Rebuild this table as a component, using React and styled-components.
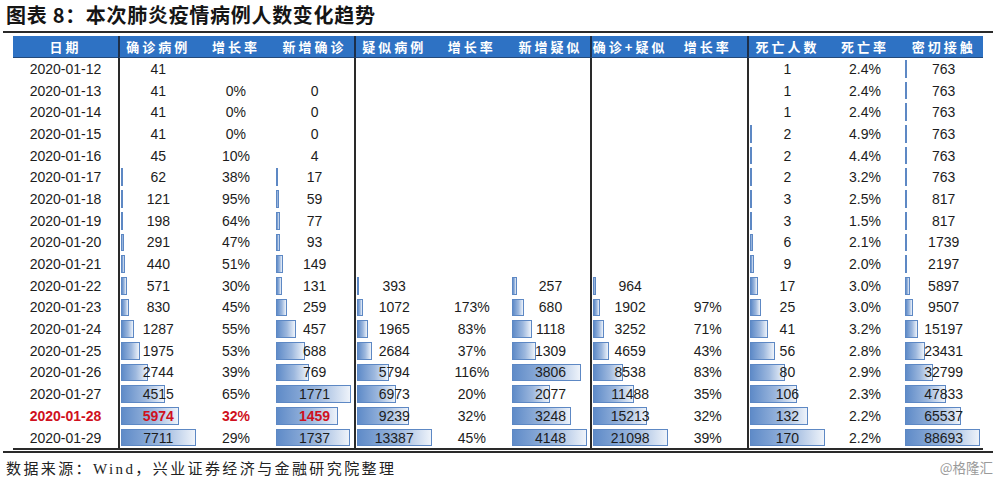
import React from "react";
import styled, { createGlobalStyle } from "styled-components";

const dates = [
  "2020-01-12", "2020-01-13", "2020-01-14", "2020-01-15", "2020-01-16", "2020-01-17",
  "2020-01-18", "2020-01-19", "2020-01-20", "2020-01-21", "2020-01-22", "2020-01-23",
  "2020-01-24", "2020-01-25", "2020-01-26", "2020-01-27", "2020-01-28", "2020-01-29",
];

const pad = (arr) => Array(18 - arr.length).fill(null).concat(arr);

// each column: values, whether it draws data bars, whether it starts a group
const columns = [
  { title: "确诊病例", bar: true, sep: true, red: true,
    values: [41, 41, 41, 41, 45, 62, 121, 198, 291, 440, 571, 830, 1287, 1975, 2744, 4515, 5974, 7711] },
  { title: "增长率", red: true,
    values: [null, "0%", "0%", "0%", "10%", "38%", "95%", "64%", "47%", "51%", "30%", "45%", "55%", "53%", "39%", "65%", "32%", "29%"] },
  { title: "新增确诊", bar: true, red: true,
    values: [null, 0, 0, 0, 4, 17, 59, 77, 93, 149, 131, 259, 457, 688, 769, 1771, 1459, 1737] },
  { title: "疑似病例", bar: true, sep: true,
    values: pad([393, 1072, 1965, 2684, 5794, 6973, 9239, 13387]) },
  { title: "增长率",
    values: pad([null, "173%", "83%", "37%", "116%", "20%", "32%", "45%"]) },
  { title: "新增疑似", bar: true,
    values: pad([257, 680, 1118, 1309, 3806, 2077, 3248, 4148]) },
  { title: "确诊+疑似", bar: true, sep: true,
    values: pad([964, 1902, 3252, 4659, 8538, 11488, 15213, 21098]) },
  { title: "增长率",
    values: pad([null, "97%", "71%", "43%", "83%", "35%", "32%", "39%"]) },
  { title: "死亡人数", bar: true, sep: true,
    values: [1, 1, 1, 2, 2, 2, 3, 3, 6, 9, 17, 25, 41, 56, 80, 106, 132, 170] },
  { title: "死亡率",
    values: ["2.4%", "2.4%", "2.4%", "4.9%", "4.4%", "3.2%", "2.5%", "1.5%", "2.1%", "2.0%", "3.0%", "3.0%", "3.2%", "2.8%", "2.9%", "2.3%", "2.2%", "2.2%"] },
  { title: "密切接触", bar: true,
    values: [763, 763, 763, 763, 763, 763, 817, 817, 1739, 2197, 5897, 9507, 15197, 23431, 32799, 47833, 65537, 88693] },
];

const HIGHLIGHT = 16;
const BAR_MAX = 75;

const App = () => {
  return (
    <>
      <GlobalStyle />
      <Page>
        <Title>图表 8：本次肺炎疫情病例人数变化趋势</Title>
        <Rule />
        <Table>
          <HeadCell>日期</HeadCell>
          {columns.map((c, i) => (
            <HeadCell key={i} $sep={c.sep}>
              {c.title}
            </HeadCell>
          ))}
          {dates.map((d, r) => (
            <React.Fragment key={d}>
              <Cell $red={r === HIGHLIGHT}>{d}</Cell>
              {columns.map((c, i) => {
                const v = c.values[r];
                let w = 0;
                if (c.bar && typeof v === "number") {
                  const max = Math.max(...c.values.filter((x) => x != null));
                  w = (v / max) * BAR_MAX;
                  w = w < 0.5 ? 0 : Math.max(w, 2);
                }
                return (
                  <Cell key={i} $sep={c.sep} $red={c.red && r === HIGHLIGHT}>
                    {w > 0 && <Bar style={{ width: w }} />}
                    <Value>{v}</Value>
                  </Cell>
                );
              })}
            </React.Fragment>
          ))}
        </Table>
        <Rule $thin />
        <Footer>
          <Source>数据来源：Wind，兴业证券经济与金融研究院整理</Source>
          <Mark>@格隆汇</Mark>
        </Footer>
      </Page>
    </>
  );
};

const GlobalStyle = createGlobalStyle`
  body {
    margin: 0;
    background: #fff;
  }
  * {
    box-sizing: border-box;
  }
`;

const Page = styled.div`
  width: 1000px;
  height: 477px;
  overflow: hidden;
  font-family: "Liberation Sans", Arial, sans-serif;
  color: #1c1c1c;
`;

const Title = styled.h1`
  margin: 0;
  height: 31px;
  padding-left: 6px;
  line-height: 30px;
  font-family: "Noto Sans CJK SC", sans-serif;
  font-size: 20px;
  font-weight: 700;
  letter-spacing: 0.7px;
  color: #151515;
`;

const Rule = styled.div`
  height: 2px;
  margin: ${(p) => (p.$thin ? "1px 7px 0 3px" : "0 7px 0 3px")};
  background: #2a2a2a;
`;

const Table = styled.div`
  display: grid;
  grid-template-columns: 105px repeat(11, 1fr);
  grid-template-rows: 22px repeat(18, 21.7px);
  width: 970px;
  margin: 3px 0 0 13px;
  border-bottom: 2px solid #2a2a2a;
`;

const HeadCell = styled.div`
  display: flex;
  align-items: center;
  justify-content: center;
  background: #2e72c4;
  border-bottom: 1px solid #23497a;
  border-left: ${(p) => (p.$sep ? "2px solid #1d2f4a" : "none")};
  color: #fff;
  font-family: "Noto Sans CJK SC", sans-serif;
  font-size: 13px;
  font-weight: 700;
  letter-spacing: 3px;
  white-space: nowrap;
`;

const Cell = styled.div`
  position: relative;
  display: flex;
  align-items: center;
  justify-content: center;
  border-left: ${(p) => (p.$sep ? "2px solid #2a2a2a" : "none")};
  font-size: 14px;
  font-weight: ${(p) => (p.$red ? 700 : 400)};
  color: ${(p) => (p.$red ? "#d01020" : "#1c1c1c")};
`;

const Bar = styled.div`
  position: absolute;
  left: 1px;
  top: 2px;
  bottom: 2px;
  border: 1px solid #5d88c4;
  background: linear-gradient(to right, #5f8bc8, #9db8de 55%, #eef3fa);
`;

const Value = styled.span`
  position: relative;
`;

const Footer = styled.div`
  display: flex;
  justify-content: space-between;
  align-items: center;
  height: 26px;
  padding: 2px 7px 0 6px;
`;

const Source = styled.div`
  font-family: "Liberation Serif", "Noto Sans CJK SC", serif;
  font-size: 15px;
  letter-spacing: 2.4px;
  color: #222;
`;

const Mark = styled.div`
  font-family: "Noto Sans CJK SC", sans-serif;
  font-size: 13.5px;
  color: #9a9a9a;
`;

export default App;
